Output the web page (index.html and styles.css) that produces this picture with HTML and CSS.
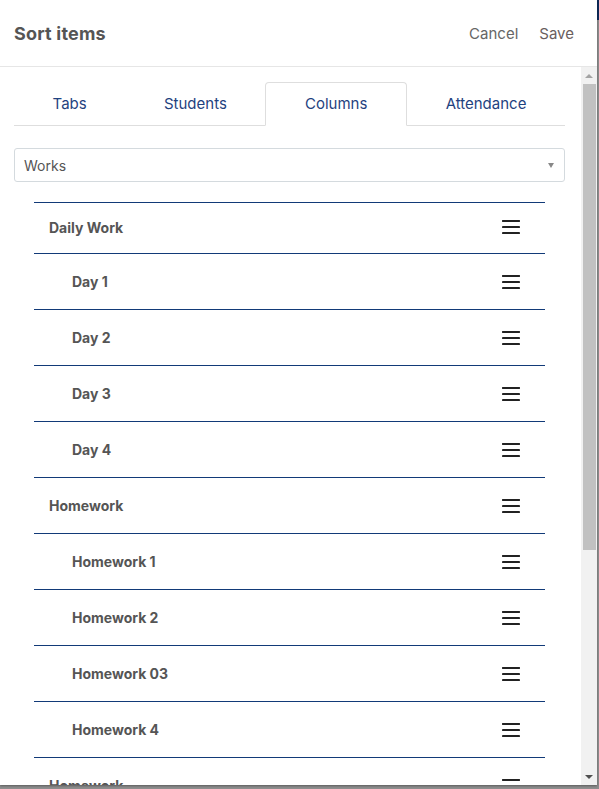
FILE: index.html
```html
<!DOCTYPE html>
<html lang="en">
<head>
<meta charset="utf-8">
<title>Sort items</title>
<link rel="stylesheet" href="styles.css">
</head>
<body>
<div class="modal">
  <header class="modal-header">
    <h1 class="modal-title">Sort items</h1>
    <div class="modal-actions">
      <span class="action cancel">Cancel</span>
      <span class="action save">Save</span>
    </div>
  </header>
  <div class="modal-body">
    <div class="scroll-content">
      <nav class="tabs">
        <div class="tab">Tabs</div>
        <div class="tab">Students</div>
        <div class="tab active">Columns</div>
        <div class="tab">Attendance</div>
      </nav>
      <div class="select">
        <span class="select-value">Works</span>
        <span class="select-caret"></span>
      </div>
      <ul class="sort-list">
        <li class="row group first"><span>Daily Work</span><svg class="handle" viewBox="0 0 18 14" width="18" height="14"><path d="M1 1H17M1 7H17M1 13H17"/></svg></li>
        <li class="row item"><span>Day 1</span><svg class="handle" viewBox="0 0 18 14" width="18" height="14"><path d="M1 1H17M1 7H17M1 13H17"/></svg></li>
        <li class="row item"><span>Day 2</span><svg class="handle" viewBox="0 0 18 14" width="18" height="14"><path d="M1 1H17M1 7H17M1 13H17"/></svg></li>
        <li class="row item"><span>Day 3</span><svg class="handle" viewBox="0 0 18 14" width="18" height="14"><path d="M1 1H17M1 7H17M1 13H17"/></svg></li>
        <li class="row item"><span>Day 4</span><svg class="handle" viewBox="0 0 18 14" width="18" height="14"><path d="M1 1H17M1 7H17M1 13H17"/></svg></li>
        <li class="row group"><span>Homework</span><svg class="handle" viewBox="0 0 18 14" width="18" height="14"><path d="M1 1H17M1 7H17M1 13H17"/></svg></li>
        <li class="row item"><span>Homework 1</span><svg class="handle" viewBox="0 0 18 14" width="18" height="14"><path d="M1 1H17M1 7H17M1 13H17"/></svg></li>
        <li class="row item"><span>Homework 2</span><svg class="handle" viewBox="0 0 18 14" width="18" height="14"><path d="M1 1H17M1 7H17M1 13H17"/></svg></li>
        <li class="row item"><span>Homework 03</span><svg class="handle" viewBox="0 0 18 14" width="18" height="14"><path d="M1 1H17M1 7H17M1 13H17"/></svg></li>
        <li class="row item"><span>Homework 4</span><svg class="handle" viewBox="0 0 18 14" width="18" height="14"><path d="M1 1H17M1 7H17M1 13H17"/></svg></li>
        <li class="row group"><span>Homework</span><svg class="handle" viewBox="0 0 18 14" width="18" height="14"><path d="M1 1H17M1 7H17M1 13H17"/></svg></li>
      </ul>
    </div>
    <div class="scrollbar">
      <div class="sb-button"><span class="sb-arrow up"></span></div>
      <div class="sb-track"><div class="sb-thumb"></div></div>
      <div class="sb-button"><span class="sb-arrow down"></span></div>
    </div>
  </div>
</div>
</body>
</html>
```
FILE: styles.css
```css
* { box-sizing: border-box; }

html, body {
  margin: 0;
  padding: 0;
}

body {
  width: 599px;
  height: 789px;
  overflow: hidden;
  background: linear-gradient(to bottom, #0d2b5a 0, #0d2b5a 20px, #8d8d8d 20px);
  font-family: Inter, "Noto Sans", sans-serif;
}

.modal {
  width: 597px;
  height: 785px;
  background: #fff;
  display: flex;
  flex-direction: column;
  box-shadow: 0 1px 2px rgba(0,0,0,0.35);
}

.modal-header {
  height: 67px;
  flex: none;
  border-bottom: 1px solid #e6e6e6;
  display: flex;
  align-items: center;
  justify-content: space-between;
  padding: 0 23px 0 14px;
}

.modal-title {
  margin: 0;
  font-size: 18px;
  font-weight: 700;
  color: #555;
  letter-spacing: 0.2px;
}

.modal-actions {
  display: flex;
  gap: 21px;
  font-size: 15px;
}

.action.cancel { color: #666; }
.action.save { color: #6a5e5e; }

.modal-body {
  flex: 1;
  display: flex;
  min-height: 0;
}

.scroll-content {
  flex: 1;
  overflow: hidden;
  padding: 15px 16px 0 14px;
}

.tabs {
  display: flex;
  height: 44px;
}

.tab {
  flex: 1 1 auto;
  display: flex;
  align-items: center;
  justify-content: center;
  font-size: 15px;
  color: #1f4280;
  border-bottom: 1px solid #dedede;
  padding: 0 10px;
}

.tab.active {
  border: 1px solid #dedede;
  border-bottom-color: transparent;
  border-radius: 4px 4px 0 0;
  padding-bottom: 1px;
}

.select {
  margin-top: 22px;
  height: 34px;
  border: 1px solid #d4dade;
  border-radius: 3px;
  display: flex;
  align-items: center;
  justify-content: space-between;
  padding: 0 10px 0 9px;
}

.select-value {
  font-size: 14px;
  color: #555;
}

.select-caret {
  width: 0;
  height: 0;
  border-left: 3.5px solid transparent;
  border-right: 3.5px solid transparent;
  border-top: 5px solid #888;
}

.sort-list {
  list-style: none;
  margin: 20px 20px 0;
  padding: 0;
  border-top: 1px solid #123a78;
}

.row {
  height: 56px;
  border-bottom: 1px solid #123a78;
  display: flex;
  align-items: center;
  justify-content: space-between;
  padding-right: 25px;
  font-size: 14px;
  font-weight: 700;
  color: #555;
}

.row.first { height: 51px; padding-bottom: 2px; }
.row.group { padding-left: 15px; }
.row.item { padding-left: 38px; }

.handle {
  flex: none;
  fill: none;
  stroke: #222;
  stroke-width: 2.2;
  stroke-linecap: round;
}

.scrollbar {
  width: 16px;
  flex: none;
  background: #f1f1f1;
  display: flex;
  flex-direction: column;
}

.sb-button {
  height: 17px;
  flex: none;
  display: flex;
  align-items: center;
  justify-content: center;
}

.sb-arrow {
  width: 0;
  height: 0;
  border-left: 4px solid transparent;
  border-right: 4px solid transparent;
}

.sb-arrow.up { border-bottom: 4px solid #a3a3a3; }
.sb-arrow.down { border-top: 4px solid #505050; }

.sb-track {
  flex: 1;
}

.sb-thumb {
  height: 466px;
  margin: 0 1px 0 2px;
  background: #c1c1c1;
}
```
